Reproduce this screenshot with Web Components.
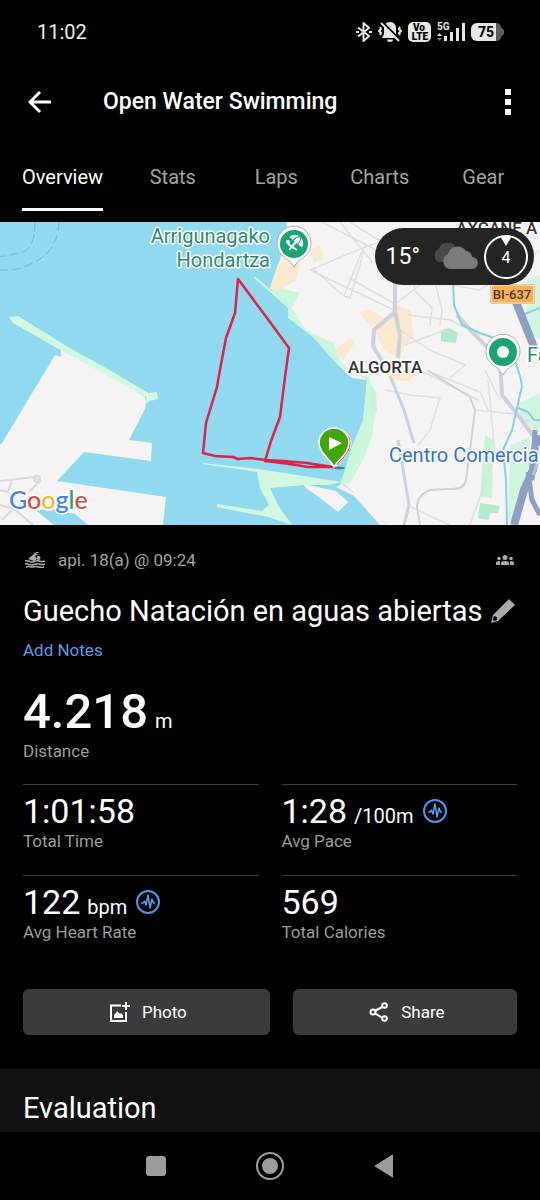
<!DOCTYPE html>
<html lang="en">
<head>
<meta charset="utf-8">
<meta name="viewport" content="width=device-width, initial-scale=1">
<title>Open Water Swimming</title>
<style>
  body {
    margin: 0;
    background: #000;
    color: #fff;
    font-family: Roboto, "Liberation Sans", sans-serif;
    font-size: 17px;
    line-height: 20px;
  }
</style>
</head>
<body>
<oa-app></oa-app>

<script>
const icons = {
  bluetooth: [16, 20, `<path d="M2 5.500 13 14 7.500 19V1L13 6 2 14.500" fill="none" stroke="#e6e6e6" stroke-width="2" stroke-linejoin="round"/><path d="M0 10h3M13 10h3" stroke="#e6e6e6" stroke-width="2"/>`],
  muted: [24, 20, `<path d="M12 0c4 0 6 3 6 6v6l3 4H4l2-4V6c0-3 2-6 6-6Z" fill="#e6e6e6"/><path d="M9 17.500h6a3 2.500 0 0 1-6 0Z" fill="#e6e6e6"/><path d="M4 0 23 19" stroke="#000" stroke-width="2.500"/><path d="M3 1 21 19" stroke="#e6e6e6" stroke-width="2"/><path d="m2 5 1 2-2 2 2 2-1 2M22 5l-1 2 2 2-2 2 1 2" fill="none" stroke="#e6e6e6" stroke-width="2"/>`],
  volte: [23, 20, `<rect y="0" width="23" height="20" rx="5" fill="#e6e6e6"/><text x="11" y="9" text-anchor="middle" font-size="10" font-weight="900">Vo</text><text x="12" y="18" text-anchor="middle" font-size="10" font-weight="900">LTE</text>`],
  signal: [28, 20, `<text x="0" y="8" font-size="10" font-weight="700" fill="#e6e6e6">5G</text><path d="m0 14 2.500-3L5 14Z" fill="#e6e6e6"/><path d="m0 16 2.500 3L5 16Z" fill="#777"/><path d="M7 14h3v5H7ZM13 10h3v9h-3ZM19 6h3v13h-3ZM25 1h3v18h-3Z" fill="#e6e6e6"/>`],
  battery: [33, 18, `<path d="M24 0h1a5 5 0 0 1 5 4l3 3v4l-3 3a5 5 0 0 1-5 4h-1Z" fill="#5c5c5c"/><path d="M6 0h19v18H6a6 6 0 0 1-6-6V6a6 6 0 0 1 6-6Z" fill="#e6e6e6"/><text x="15" y="14" text-anchor="middle" font-size="14" font-weight="800">75</text>`],
  back: [24, 24, `<path d="M23 12H2M12 2 2 12l10 10" fill="none" stroke="#fff" stroke-width="3"/>`],
  more: [6, 26, `<path d="M0 0h6v6H0ZM0 10h6v6H0ZM0 20h6v6H0Z" fill="#fff"/>`],
  swim: [20, 16, `<path d="m3 7 7-6 3 1-3 2 2 3-3 2Z" fill="#aaa"/><circle cx="13.500" cy="6" r="2" fill="#aaa"/><path d="M9 1.500 14 0" stroke="#aaa" stroke-width="1"/><path d="M0 9c3-1 4 1 7 1s4-2 7-1 4 1 6 0M0 12c3-1 4 1 7 1s4-2 7-1 4 1 6 0M1 15c3-1 4 0 6 0s4-1 7 0 3 0 5 0" fill="none" stroke="#aaa" stroke-width="1.500"/>`],
  people: [18, 10, `<g fill="#aaa"><circle cx="9" cy="2.500" r="2.500"/><circle cx="3" cy="3.500" r="1.800"/><circle cx="15" cy="3.500" r="1.800"/><path d="M5 10V8q0-2 4-2t4 2v2ZM0 10V8q0-2 3-2l1 .500V10ZM18 10V8q0-2-3-2l-1 .500V10Z"/></g>`],
  pencil: [24, 24, `<path d="M18 0 24 6 7 22 0 24 2 16Z" fill="#aaa"/><path d="m3 17 3 1v3l-3 1-1-1Z" fill="#000"/>`],
  insight: [24, 24, `<circle cx="12" cy="12" r="11" fill="none" stroke="#4f96e8" stroke-width="2"/><path d="M5 13h2l1.500-2 1.500 4 2-10 2 13 2-9 1.500 4H19" fill="none" stroke="#5ba0ef" stroke-width="1.500" stroke-linejoin="round"/>`],
  photo: [20, 20, `<path d="M11 3.500H1V19h15V10" fill="none" stroke="#fff" stroke-width="2"/><path d="M16 0v8M12 4h8" stroke="#fff" stroke-width="2"/><path d="M4 16v-3l2-2 1-2 2 2 1 1 1-1 2 2v3Z" fill="#fff"/>`],
  share: [20, 20, `<path d="m4 10 11-6M4 10l11 7" stroke="#fff" stroke-width="2"/><g fill="#3b3b3b" stroke="#fff" stroke-width="2"><circle cx="4" cy="10" r="2.500"/><circle cx="15.500" cy="3.500" r="2.300"/><circle cx="15.500" cy="16.500" r="2.300"/></g>`],
  cloud: [46, 28, `<path d="M7 19a7 7 0 0 1 0-13A9 9 0 0 1 23 3l4 4v12Z" fill="#484848"/><path d="M17 26a8 8 0 0 1-1-15 10 10 0 0 1 18-3 7 7 0 0 1 6 6 6 6 0 0 1 0 12Z" fill="#7b7b7b"/>`],
  wind: [46, 46, `<circle cx="23" cy="23" r="21" fill="none" stroke="#fff" stroke-width="2"/><path d="M17 2h12l-6 10Z" fill="#fff"/><text x="23" y="29" text-anchor="middle" font-size="16" fill="#fff">4</text>`],
  recents: [22, 22, `<rect x="1" y="1" width="20" height="20" rx="3" fill="#9c9c9c"/>`],
  home: [28, 28, `<circle cx="14" cy="14" r="13" fill="none" stroke="#9c9c9c" stroke-width="2"/><circle cx="14" cy="14" r="8" fill="#9c9c9c"/>`],
  previous: [20, 24, `<path d="M18.500 1v22L1 12Z" fill="#9c9c9c" stroke="#9c9c9c" stroke-linejoin="round"/>`],
}

class Icon extends HTMLElement {
  connectedCallback() {
    if (this.shadowRoot) return
    const [width, height, body] = icons[this.getAttribute('name')]
    this.attachShadow({ mode: 'open' }).innerHTML = `
      <style>
        :host { display: block; flex: none; }
        svg { display: block; }
      </style>
      <svg width="${width}" height="${height}" viewBox="0 0 ${width} ${height}" aria-hidden="true">${body}</svg>
    `
  }
}

/** Base for elements that only clone a template. */
class View extends HTMLElement {
  connectedCallback() {
    if (this.shadowRoot) return
    const template = document.createElement('template')
    template.innerHTML = this.constructor.markup
    this.attachShadow({ mode: 'open' }).append(template.content.cloneNode(true))
  }
}

class StatusBar extends View {
  static markup = `
    <style>
      :host {
        display: flex;
        align-items: center;
        justify-content: space-between;
        height: 64px;
        padding: 0 36px 0 37px;
        font-size: 20px;
        color: #eee;
      }
      div { display: flex; align-items: center; gap: 6px; }
    </style>
    <span>11:02</span>
    <div>
      <oa-icon name="bluetooth"></oa-icon>
      <oa-icon name="muted"></oa-icon>
      <oa-icon name="volte"></oa-icon>
      <oa-icon name="signal"></oa-icon>
      <oa-icon name="battery"></oa-icon>
    </div>
  `
}

class AppBar extends View {
  static markup = `
    <style>
      :host {
        display: flex;
        align-items: center;
        height: 76px;
        padding: 0 29px 0 28px;
      }
      h1 {
        flex: 1;
        margin: 0 0 0 51px;
        font-size: 23px;
        font-weight: 500;
        line-height: 28px;
      }
      button { padding: 0; border: 0; background: none; }
    </style>
    <button type="button" aria-label="Back"><oa-icon name="back"></oa-icon></button>
    <h1><slot></slot></h1>
    <button type="button" aria-label="More"><oa-icon name="more"></oa-icon></button>
  `
}

class Tab extends View {
  static markup = `
    <style>
      :host { display: flex; justify-content: center; padding: 0 18px; }
      button {
        padding: 25px 0 19px;
        border: 0;
        border-bottom: 3px solid transparent;
        background: none;
        color: #a3a3a3;
        font: inherit;
        font-size: 20px;
        line-height: 24px;
      }
      :host([selected]) button { border-color: #fff; color: #fff; }
    </style>
    <button type="button"><slot></slot></button>
  `
}

class Tabs extends View {
  static markup = `
    <style>
      :host {
        display: grid;
        grid-template-columns: auto repeat(4, 1fr);
        padding: 0 5px 11px 4px;
      }
    </style>
    <slot></slot>
  `
}

class RouteMap extends View {
  static markup = `
    <style>
      :host { display: block; position: relative; overflow: hidden; }
      svg { display: block; width: 100%; }
      .halo { paint-order: stroke; stroke: #fff; stroke-width: 3px; stroke-linejoin: round; }
      slot { position: absolute; top: 6px; right: 6px; display: block; }
    </style>
    <svg viewBox="0 222 540 303" role="img" aria-label="Route">
      <rect y="222" width="540" height="303" fill="#91d9ee"/>

      <!-- depth contours -->
      <g fill="none" stroke="#62bfd6" stroke-dasharray="9 4">
        <path d="M35 222Q35 250 20 253L0 257"/>
        <path d="M59 222Q58 244 45 255T13 270L0 270"/>
      </g>

      <!-- port -->
      <path d="M0 445 2 443 43 375 55 355 61 357V350L115 377 145 397 146 407 129 440 152 443 151 461 84 452 57 481 166 497 163 525H0Z" fill="#f5f3f4"/>
      <path d="M9 317 18 316 68 347 115 373 148 393 157 392 158 399 150 401 145 404 146 397 108 376 62 351 13 323Z" fill="#d3f8e2"/>
      <path d="M37 511 48 508 75 514 88 525H54Z" fill="#91d9ee"/>
      <g fill="none" stroke="#d8d9e2" stroke-width="2">
        <path d="M0 481 34 477 40 481 36 485 29 492M0 490 8 492 12 480M0 505 14 509 33 525M2 520 12 510"/>
        <circle cx="37" cy="479" r="3"/>
      </g>

      <!-- mainland -->
      <path d="M287 222 285 245 276 270 270 288 288 305 290 317 313 337 338 365 352 378 367 380 365 403 363 420 352 447 342 482 360 498 387 525H540V222Z" fill="#f5f3f4"/>
      <path d="M253 277 256 277 272 291 276 287 300 293 292 308 306 330 334 343 340 360 350 374 369 376 373 395 376 410 372 437 363 460 350 483 340 485 352 447 363 420 367 380 338 365 313 337 288 318V308L270 292Z" fill="#ccf6dc"/>
      <path d="M370 383 376 392 377 411 370 409Z" fill="#c6f2d6"/>
      <g fill="#fbe9cf">
        <path d="M276 270 288 253 300 264 296 280 281 290 270 289Z"/>
        <path d="M310 250 320 246 324 258 314 263Z"/>
        <path d="M359 312 368 309 384 318 398 306 411 310 413 336 406 345 398 358 384 350 376 333Z"/>
        <path d="M335 350 350 338 355 342 343 361Z"/>
        <path d="M380 365 420 368 410 381 390 380Z"/>
      </g>
      <g fill="#d0f5df">
        <path d="M540 275 526 280 527 330 540 340Z"/>
        <path d="M517 405 540 392V436L523 420Z"/>
        <path d="M510 445 530 437 530 480 517 515 508 521Z"/>
        <path d="M485 435 493 440 492 498 480 497Z" fill="#c6f2d6"/>
        <path d="M441 330 450 328 458 333 456 343 447 342 441 341Z" fill="#b5ebca"/>
        <path d="M480 503 500 506 498 513 490 513 489 520 478 518Z" fill="#b5ebca"/>
      </g>

      <!-- breakwaters and marina -->
      <path d="M203 463 258 469 342 482 328 485 305 485 270 488 278 505 292 525 268 517 217 507V504L262 511 269 505 260 488 257 472 203 464Z" fill="#d3f8e2"/>
      <path d="M303 484 336 491 348 502 338 512 320 498 306 488Z" fill="#f5f3f4"/>
      <path d="M336 487 342 484 360 497 387 525H380L354 496Z" fill="#f5f3f4"/>

      <!-- minor streets -->
      <g fill="none" stroke="#dedee4" stroke-width="1.500">
        <path d="M322 222 395 260 440 285M310 270 365 247 400 235M312 268 344 296 350 298 360 265 364 250M344 296 362 251M349 278 395 304M310 270 394 310"/>
        <path d="M395 304 440 270 470 240M420 230 414 290 432 308 430 325M436 286 442 310 440 325M408 315 450 320 480 335M400 330 430 350 465 365 450 378"/>
        <path d="M340 222 372 262M350 222 378 240 410 236M440 283 480 290 540 250M385 390 410 395 440 398 430 430 418 445M445 330 405 345"/>
        <path d="M411 507 450 525M475 410 515 414M485 370 500 400M488 380 495 455 470 525M420 370 478 400"/>
        <path d="M520 430 527 420 540 421M430 372 480 392 488 410"/>
      </g>
      <path d="M427 370 470 397 475 410 470 450 466 480Q464 490 450 489L430 490Q417 495 417 508L420 525" fill="none" stroke="#cfd0d8" stroke-width="2"/>

      <!-- main roads -->
      <g fill="none" stroke="#ccd1dc" stroke-width="4">
        <path d="M395 280V312L374 330 373 346 382 361M395 312 400 335 398 358"/>
        <path d="M390 376 404 410 414 443M398 440 409 505 404 525" stroke-width="3"/>
        <path d="M457 315 475 335 500 360 502 395 518 415 536 440"/>
      </g>
      <g fill="none" stroke="#86d2e4" stroke-width="2">
        <path d="M453 280 454 305 462 325 480 333 500 340 513 355 520 376 522 386 517 408 512 430 503 450 506 480 507 525"/>
        <path d="M518 408 528 412 534 420 540 420M540 308 522 315"/>
      </g>
      <g fill="none" stroke="#8f9fc2">
        <path d="M516 302 534 347" stroke-width="8"/>
        <path d="M537 435 533 470 524 490 514 525" stroke-width="8"/>
        <path d="M528 472 532 500 540 515M535 430 532 480" stroke-width="5"/>
        <path d="M540 455 533 475" stroke="#b6c0d6" stroke-width="3"/>
      </g>

      <!-- place labels -->
      <g font-size="20">
        <g class="halo" fill="#2f8b6b" text-anchor="end">
          <text x="270" y="243">Arrigunagako</text>
          <text x="270" y="267">Hondartza</text>
        </g>
        <text class="halo" x="527" y="362" fill="#2f8b6b">Fa</text>
        <text class="halo" x="389" y="462" fill="#2f72d2">Centro Comercial</text>
      </g>
      <g class="halo" font-size="17" font-weight="500" fill="#333">
        <text x="348" y="373">ALGORTA</text>
        <text x="456" y="234">AXCANE A</text>
      </g>
      <rect x="490" y="284" width="45" height="20" rx="4" fill="#f5a04a"/>
      <rect x="491" y="285" width="43" height="18" rx="3" fill="#fdb05c" stroke="#fff0dc"/>
      <text x="512" y="299" text-anchor="middle" font-size="13" font-weight="500" fill="#4c3a24">BI-637</text>

      <!-- place pins -->
      <g fill="#fff" stroke="#a9b5b5">
        <path d="M294 267Q291 261 284 257A17 17 0 1 1 304 257Q297 261 294 267Z"/>
        <path d="M503 375Q500 369 493 365A17 17 0 1 1 513 365Q506 369 503 375Z"/>
      </g>
      <circle cx="294" cy="244" r="14" fill="#1ba375"/>
      <circle cx="503" cy="352" r="14" fill="#1ba375"/>
      <circle cx="503" cy="352" r="6" fill="#fff"/>
      <g transform="rotate(40 295 243)">
        <path d="M287 242a8 7 0 0 1 16 0Z" fill="#fff"/>
        <path d="M292 242q0-5 3-7M298 242q0-5-3-7" fill="none" stroke="#1ba375"/>
        <path d="M295 242v10" stroke="#fff" stroke-width="2"/>
      </g>
      <path d="m288 244 9 6" stroke="#fff" stroke-width="2"/>
      <circle cx="288" cy="242" r="2" fill="#fff"/>

      <!-- swim track -->
      <path d="M333 467 307 463 283 461 265 460 250 458 238 459 233 457 215 456 203 453 206 423 217 387 219 375 226 338 235 313 238 279 270 322 289 348 285 377 280 417 271 441 265 461 290 464 308 467 334 467" fill="none" stroke="#dc2248" stroke-width="2.500" stroke-linejoin="round"/>
      <ellipse cx="339" cy="468" rx="6" ry="1.500" fill="#355868" opacity=".7"/>
      <path d="M337 466C334 460 323 453 323 443a14 14 0 0 1 28 0c0 10-10 17-14 23Z" fill="#d3202e" stroke="#fff"/>
      <path d="M334 467C331 460 319 453 319 443a15 15 0 0 1 30 0c0 10-11 17-15 24Z" fill="#42a607" stroke="#fff" stroke-width="1.500"/>
      <path d="m329 437 13 6-13 7Z" fill="#fff"/>

      <text class="halo" x="9" y="509" font-family="Lato, Roboto, sans-serif" font-size="25" font-weight="500"><tspan fill="#4285e8">G</tspan><tspan fill="#dc4a3d">o</tspan><tspan fill="#eebb2c">o</tspan><tspan fill="#4285e8">g</tspan><tspan fill="#35a155">l</tspan><tspan fill="#dc4a3d">e</tspan></text>
    </svg>
    <slot></slot>
  `
}

class Weather extends View {
  static markup = `
    <style>
      :host {
        display: flex;
        align-items: center;
        gap: 12px;
        height: 57px;
        padding: 0 5px 0 11px;
        border-radius: 29px;
        background: #242424;
        font-size: 23px;
      }
      .icons { display: flex; align-items: center; gap: 5px; }
    </style>
    <span><slot></slot></span>
    <div class="icons">
      <oa-icon name="cloud"></oa-icon>
      <oa-icon name="wind"></oa-icon>
    </div>
  `
}

class Summary extends View {
  static markup = `
    <style>
      :host { display: block; padding: 25px 23px 0; }
      .meta { display: flex; align-items: center; padding: 0 3px 0 2px; color: #a3a3a3; }
      .meta span { flex: 1; margin-left: 13px; }
      .title { display: flex; align-items: center; gap: 8px; margin-top: 23px; }
      h2 { margin: 0; font-size: 29px; font-weight: 400; line-height: 36px; }
      button { padding: 0; border: 0; background: none; }
      a { display: inline-block; margin-top: 11px; color: #589bea; text-decoration: none; }
    </style>
    <div class="meta">
      <oa-icon name="swim"></oa-icon>
      <span><slot name="date"></slot></span>
      <oa-icon name="people"></oa-icon>
    </div>
    <div class="title">
      <h2><slot></slot></h2>
      <button type="button" aria-label="Edit"><oa-icon name="pencil"></oa-icon></button>
    </div>
    <a href="#notes">Add Notes</a>
  `
}

class Stat extends HTMLElement {
  connectedCallback() {
    if (this.shadowRoot) return
    const unit = this.getAttribute('unit')
    this.attachShadow({ mode: 'open' }).innerHTML = `
      <style>
        :host { display: block; padding: 6px 0 24px; border-top: 1px solid #404040; }
        :host([large]) { grid-column: 1 / -1; padding: 0 0 23px; border: 0; }
        .value { display: flex; align-items: center; height: 40px; font-size: 34px; line-height: 40px; }
        :host([large]) .value { height: 58px; font-size: 49px; font-weight: 500; line-height: 58px; }
        small { margin-left: 7px; font-size: 20px; font-weight: 400; line-height: 20px; }
        oa-icon { margin-left: 9px; }
        .label { color: #9c9c9c; }
      </style>
      <div class="value">
        <span><slot></slot>${unit ? `<small>${unit}</small>` : ''}</span>
        ${this.hasAttribute('insight') ? '<oa-icon name="insight"></oa-icon>' : ''}
      </div>
      <div class="label">${this.getAttribute('label')}</div>
    `
  }
}

class Stats extends View {
  static markup = `
    <style>
      :host {
        display: grid;
        grid-template-columns: 1fr 1fr;
        column-gap: 23px;
        padding: 23px 23px 0;
      }
    </style>
    <slot></slot>
  `
}

class ActionButton extends View {
  static markup = `
    <style>
      :host { display: block; }
      button {
        display: flex;
        align-items: center;
        justify-content: center;
        gap: 12px;
        width: 100%;
        height: 46px;
        padding: 0 4px 0 8px;
        border: 0;
        border-radius: 6px;
        background: #3b3b3b;
        color: #fff;
        font: inherit;
      }
    </style>
    <button type="button"><slot name="icon"></slot><slot></slot></button>
  `
}

class Actions extends View {
  static markup = `
    <style>
      :host {
        display: grid;
        grid-template-columns: 11fr 10fr;
        gap: 23px;
        padding: 23px 23px 34px;
      }
    </style>
    <slot></slot>
  `
}

class Section extends View {
  static markup = `
    <style>
      :host { display: block; padding: 21px 23px 6px; background: #111; }
      h2 { margin: 0; font-size: 29px; font-weight: 400; line-height: 36px; }
    </style>
    <h2><slot></slot></h2>
  `
}

class NavBar extends View {
  static markup = `
    <style>
      :host {
        display: flex;
        align-items: center;
        justify-content: center;
        height: 68px;
        background: #000;
      }
      button {
        display: flex;
        justify-content: center;
        width: 114px;
        padding: 0;
        border: 0;
        background: none;
      }
    </style>
    <button type="button" aria-label="Recents"><oa-icon name="recents"></oa-icon></button>
    <button type="button" aria-label="Home"><oa-icon name="home"></oa-icon></button>
    <button type="button" aria-label="Previous"><oa-icon name="previous"></oa-icon></button>
  `
}

class App extends View {
  static markup = `
    <style>
      :host { display: block; }
    </style>
    <oa-status-bar></oa-status-bar>
    <oa-app-bar>Open Water Swimming</oa-app-bar>
    <oa-tabs>
      <oa-tab selected>Overview</oa-tab>
      <oa-tab>Stats</oa-tab>
      <oa-tab>Laps</oa-tab>
      <oa-tab>Charts</oa-tab>
      <oa-tab>Gear</oa-tab>
    </oa-tabs>
    <oa-route-map><oa-weather>15°</oa-weather></oa-route-map>
    <oa-summary>
      <span slot="date">api. 18(a) @ 09:24</span>
      Guecho Natación en aguas abiertas
    </oa-summary>
    <oa-stats>
      <oa-stat large label="Distance" unit="m">4.218</oa-stat>
      <oa-stat label="Total Time">1:01:58</oa-stat>
      <oa-stat label="Avg Pace" unit="/100m" insight>1:28</oa-stat>
      <oa-stat label="Avg Heart Rate" unit="bpm" insight>122</oa-stat>
      <oa-stat label="Total Calories">569</oa-stat>
    </oa-stats>
    <oa-actions>
      <oa-action-button><oa-icon slot="icon" name="photo"></oa-icon>Photo</oa-action-button>
      <oa-action-button><oa-icon slot="icon" name="share"></oa-icon>Share</oa-action-button>
    </oa-actions>
    <oa-section>Evaluation</oa-section>
    <oa-nav-bar></oa-nav-bar>
  `
}

customElements.define('oa-icon', Icon)
customElements.define('oa-status-bar', StatusBar)
customElements.define('oa-app-bar', AppBar)
customElements.define('oa-tab', Tab)
customElements.define('oa-tabs', Tabs)
customElements.define('oa-route-map', RouteMap)
customElements.define('oa-weather', Weather)
customElements.define('oa-summary', Summary)
customElements.define('oa-stat', Stat)
customElements.define('oa-stats', Stats)
customElements.define('oa-action-button', ActionButton)
customElements.define('oa-actions', Actions)
customElements.define('oa-section', Section)
customElements.define('oa-nav-bar', NavBar)
customElements.define('oa-app', App)
</script>
</body>
</html>
